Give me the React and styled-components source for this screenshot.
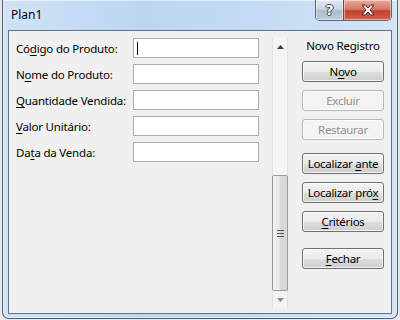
import React from 'react';
import styled, { createGlobalStyle } from 'styled-components';

const GlobalStyle = createGlobalStyle`
  html, body {
    margin: 0;
    padding: 0;
    background: #e6e8eb;
  }
  body {
    font-family: 'Segoe UI', 'Noto Sans', sans-serif;
    font-size: 11.5px;
    letter-spacing: -0.2px;
    color: #000;
  }
`;

const Window = styled.div`
  margin-left: 2px;
  width: 396px;
  height: 319px;
  box-sizing: border-box;
  display: flex;
  flex-direction: column;
  padding: 0 5px 4px 5px;
  border: 1px solid #4d5d6f;
  border-top: none;
  border-radius: 0 0 7px 7px;
  background: linear-gradient(90deg, #cfe2f6 0%, #bcd6f2 35%, #c2daf4 60%, #d3e4f6 100%);
  box-shadow: inset 0 0 0 1px rgba(255, 255, 255, 0.55);
`;

const TitleBar = styled.div`
  height: 30px;
  display: flex;
  justify-content: space-between;
  align-items: flex-start;
`;

const Title = styled.span`
  margin: 7px 0 0 3px;
  font-size: 12px;
  letter-spacing: 0;
  line-height: 16px;
  color: #000;
  text-shadow: 0 0 6px rgba(255, 255, 255, 0.9);
`;

const CaptionButtons = styled.div`
  display: flex;
  height: 20px;
  border: 1px solid #5b6877;
  border-top: none;
  border-radius: 0 0 5px 5px;
  overflow: hidden;
`;

const CaptionButton = styled.div`
  width: ${(p) => p.$w}px;
  height: 100%;
  display: flex;
  align-items: center;
  justify-content: center;
  box-sizing: border-box;
  background: ${(p) =>
    p.$close
      ? 'linear-gradient(180deg, #e8a89c 0%, #d77a68 45%, #c2402c 55%, #d2634e 100%)'
      : 'linear-gradient(180deg, #e2eaf2 0%, #c9d5e1 45%, #aebdcc 55%, #bfcbd8 100%)'};
  border-left: ${(p) => (p.$close ? '1px solid #6a4a46' : 'none')};
  box-shadow: inset 0 0 0 1px rgba(255, 255, 255, 0.45);
`;

const HelpGlyph = styled.span`
  font-family: 'DejaVu Sans', sans-serif;
  font-weight: bold;
  font-size: 14px;
  line-height: 14px;
  color: #fff;
  text-shadow: -1px 0 #3c4654, 1px 0 #3c4654, 0 -1px #3c4654, 0 1px #3c4654;
`;

const Client = styled.div`
  flex: 1;
  display: flex;
  padding: 7px 7px 5px 7px;
  border: 1px solid #657283;
  background: #f0f0f0;
`;

const Form = styled.div`
  width: 243px;
  display: grid;
  grid-template-columns: 117px 126px;
  grid-auto-rows: 20px;
  row-gap: 6px;
  align-content: start;
  align-items: center;
`;

const Label = styled.span`
  white-space: nowrap;
`;

const Key = styled.span`
  text-decoration: underline;
  text-underline-offset: 2px;
`;

const Field = styled.div`
  height: 20px;
  box-sizing: border-box;
  border: 1px solid #acadb0;
  background: #fff;
  display: flex;
  align-items: center;
  padding-left: 3px;
`;

const Caret = styled.span`
  width: 1px;
  height: 13px;
  background: #000;
`;

const ScrollBar = styled.div`
  width: 16px;
  margin-left: 13px;
  display: flex;
  flex-direction: column;
  background: #f4f4f4;
  box-shadow: inset 1px 0 #e2e2e2, inset -1px 0 #e2e2e2;
`;

const ArrowBox = styled.div`
  height: 17px;
  display: flex;
  align-items: center;
  justify-content: center;
`;

const Track = styled.div`
  flex: 1;
  display: flex;
  flex-direction: column;
  justify-content: flex-end;
`;

const Thumb = styled.div`
  height: 116px;
  box-sizing: border-box;
  border: 1px solid #9a9a9a;
  border-radius: 2px;
  background: linear-gradient(90deg, #f3f3f3 0%, #eaeaea 40%, #d6d6d6 60%, #d9d9d9 100%);
  display: flex;
  align-items: center;
  justify-content: center;
`;

const Actions = styled.div`
  width: 82px;
  margin-left: 14px;
  display: flex;
  flex-direction: column;
`;

const Heading = styled.div`
  text-align: center;
  line-height: 16px;
  margin-bottom: 7px;
  white-space: nowrap;
`;

const Button = styled.div`
  height: 21px;
  box-sizing: border-box;
  margin-top: ${(p) => p.$space || 0}px;
  display: flex;
  align-items: center;
  justify-content: center;
  white-space: nowrap;
  letter-spacing: -0.3px;
  border-radius: 3px;
  border: 1px solid ${(p) => (p.$disabled ? '#b5b9bc' : '#707070')};
  color: ${(p) => (p.$disabled ? '#8f8f8f' : '#000')};
  background: ${(p) =>
    p.$disabled
      ? '#f4f4f4'
      : 'linear-gradient(180deg, #f3f3f3 0%, #ebebeb 50%, #dddddd 51%, #cfcfcf 100%)'};
  box-shadow: inset 0 0 0 1px ${(p) => (p.$disabled ? '#fbfbfb' : 'rgba(255,255,255,0.7)')};
`;

const fields = [
  { before: 'Có', key: 'd', after: 'igo do Produto:', caret: true },
  { before: 'N', key: 'o', after: 'me do Produto:' },
  { before: '', key: 'Q', after: 'uantidade Vendida:' },
  { before: '', key: 'V', after: 'alor Unitário:' },
  { before: 'Da', key: 't', after: 'a da Venda:' },
];

export default function App() {
  return (
    <>
      <GlobalStyle />
      <Window>
        <TitleBar>
          <Title>Plan1</Title>
          <CaptionButtons>
            <CaptionButton $w={27}>
              <HelpGlyph>?</HelpGlyph>
            </CaptionButton>
            <CaptionButton $w={48} $close>
              <svg width="14" height="12" viewBox="0 0 14 12">
                <path
                  d="M1 1 H4.5 L7 4 L9.5 1 H13 L9 6 L13 11 H9.5 L7 8 L4.5 11 H1 L5 6 Z"
                  fill="#fff"
                  stroke="#4a2320"
                  strokeWidth="1"
                  strokeLinejoin="round"
                />
              </svg>
            </CaptionButton>
          </CaptionButtons>
        </TitleBar>
        <Client>
          <Form>
            {fields.map((f) => (
              <React.Fragment key={f.after}>
                <Label>
                  {f.before}
                  <Key>{f.key}</Key>
                  {f.after}
                </Label>
                <Field>{f.caret && <Caret />}</Field>
              </React.Fragment>
            ))}
          </Form>
          <ScrollBar>
            <ArrowBox>
              <svg width="7" height="4" viewBox="0 0 7 4">
                <path d="M3.5 0 L7 4 H0 Z" fill="#3d3d3d" />
              </svg>
            </ArrowBox>
            <Track>
              <Thumb>
                <svg width="7" height="7" viewBox="0 0 7 7">
                  <path d="M0 0.5 H7 M0 3.5 H7 M0 6.5 H7" stroke="#555" strokeWidth="1" />
                </svg>
              </Thumb>
            </Track>
            <ArrowBox>
              <svg width="7" height="4" viewBox="0 0 7 4">
                <path d="M0 0 H7 L3.5 4 Z" fill="#8a8a8a" />
              </svg>
            </ArrowBox>
          </ScrollBar>
          <Actions>
            <Heading>Novo Registro</Heading>
            <Button>
              <span>N<Key>o</Key>vo</span>
            </Button>
            <Button $space={8} $disabled>
              <span>Excluir</span>
            </Button>
            <Button $space={8} $disabled>
              <span>Restaurar</span>
            </Button>
            <Button $space={13}>
              <span>Localizar <Key>a</Key>nte</span>
            </Button>
            <Button $space={8}>
              <span>Localizar pró<Key>x</Key></span>
            </Button>
            <Button $space={8}>
              <span><Key>C</Key>ritérios</span>
            </Button>
            <Button $space={16}>
              <span><Key>F</Key>echar</span>
            </Button>
          </Actions>
        </Client>
      </Window>
    </>
  );
}
